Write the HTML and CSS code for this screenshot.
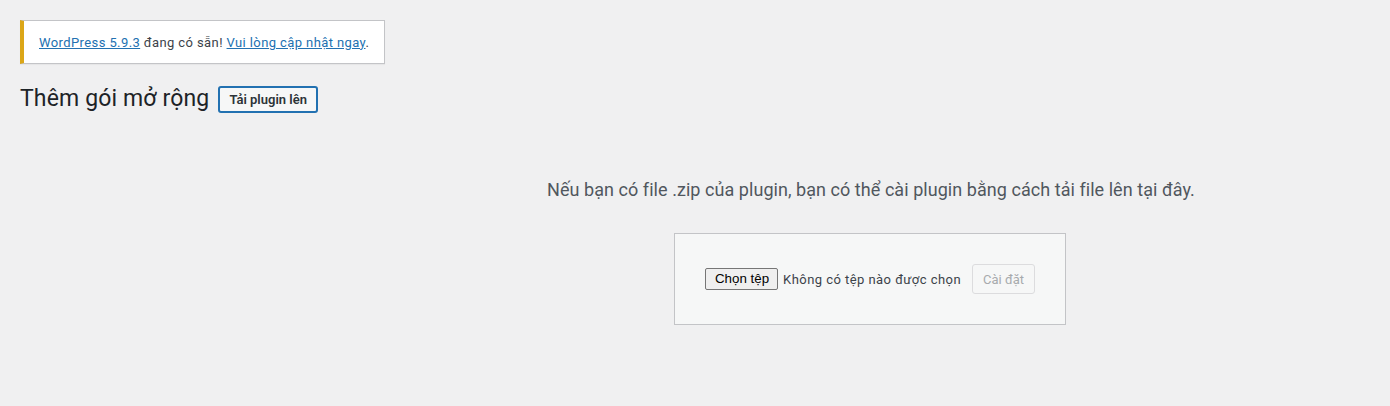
FILE: index.html
```html
<!DOCTYPE html>
<html lang="vi">

<head>
    <meta charset="UTF-8">
    <meta name="viewport" content="width=device-width, initial-scale=1.0">
    <title>Thêm gói mở rộng</title>
    <link rel="stylesheet" href="styles.css">
</head>

<body>
    <div class="wrap">

        <!-- update nag -->
        <div class="notice">
            <p><a href="#">WordPress 5.9.3</a> đang có sẵn! <a href="#">Vui lòng cập nhật ngay</a>.</p>
        </div>

        <div class="page-head">
            <h1>Thêm gói mở rộng</h1>
            <a href="#" class="page-title-action">Tải plugin lên</a>
        </div>

        <div class="upload-plugin">
            <p class="install-help">Nếu bạn có file .zip của plugin, bạn có thể cài plugin bằng cách tải file lên tại đây.</p>

            <form class="upload-form">
                <label class="file-picker">
                    <span class="file-button">Chọn tệp</span>
                    <span class="file-name">Không có tệp nào được chọn</span>
                </label>
                <button type="button" class="button" disabled>Cài đặt</button>
            </form>
        </div>

    </div>
</body>

</html>
```

FILE: styles.css
```css
body {
    font-family: Roboto, 'Noto Sans', sans-serif;
    font-size: 13px;
    margin: 0;
    padding: 0;
    background-color: #f0f0f1;
    color: #3c434a;
}

h1, p {
    margin: 0;
}

.wrap {
    padding: 20px;
}

/* Update notice */
.notice {
    width: 345px;
    height: 42px;
    display: flex;
    align-items: center;
    padding: 0 0 0 15px;
    background-color: #fff;
    border: 1px solid #c3c4c7;
    border-left: 4px solid #dba617;
    box-shadow: 0 1px 1px rgba(0, 0, 0, 0.04);
    letter-spacing: 0.4px;
}

.notice a {
    color: #2271b1;
}

/* Heading row */
.page-head {
    display: flex;
    align-items: center;
    margin-top: 20px;
    height: 30px;
}

.page-head h1 {
    font-size: 23px;
    font-weight: 400;
    line-height: 1.3;
    letter-spacing: 0.14px;
    color: #1d2327;
    margin-right: 9px;
}

.page-title-action {
    padding: 4px 9px;
    border: 2px solid #2271b1;
    border-radius: 3px;
    background-color: #f6f7f7;
    color: #2c3338;
    font-size: 13px;
    font-weight: 600;
    text-decoration: none;
}

/* Upload area */
.upload-plugin {
    margin-left: 350px;
    text-align: center;
}

.install-help {
    margin-top: 62px;
    padding-left: 2px;
    font-size: 18px;
    line-height: 27px;
    letter-spacing: 0.05px;
    color: #50575e;
}

.upload-form {
    display: inline-flex;
    align-items: center;
    margin: 30px 0;
    padding: 30px 30px 30px 30px;
    background-color: #f6f7f7;
    border: 1px solid #c3c4c7;
}

.file-picker {
    display: flex;
    align-items: center;
}

.file-button {
    height: 20px;
    line-height: 20px;
    padding: 0 8px 0 9px;
    font-family: 'Liberation Sans', Arial, sans-serif;
    font-size: 13.33px;
    color: #000;
    background-color: #efefef;
    border: 1px solid #767676;
    border-radius: 2px;
}

.file-name {
    margin-left: 5px;
    font-size: 13px;
    letter-spacing: 0.45px;
    color: #3c434a;
}

.button {
    margin-left: 11px;
    height: 30px;
    padding: 0 10px;
    font-family: inherit;
    font-size: 13px;
    color: #a7aaad;
    background-color: #f6f7f7;
    border: 1px solid #dcdcde;
    border-radius: 3px;
}
```
